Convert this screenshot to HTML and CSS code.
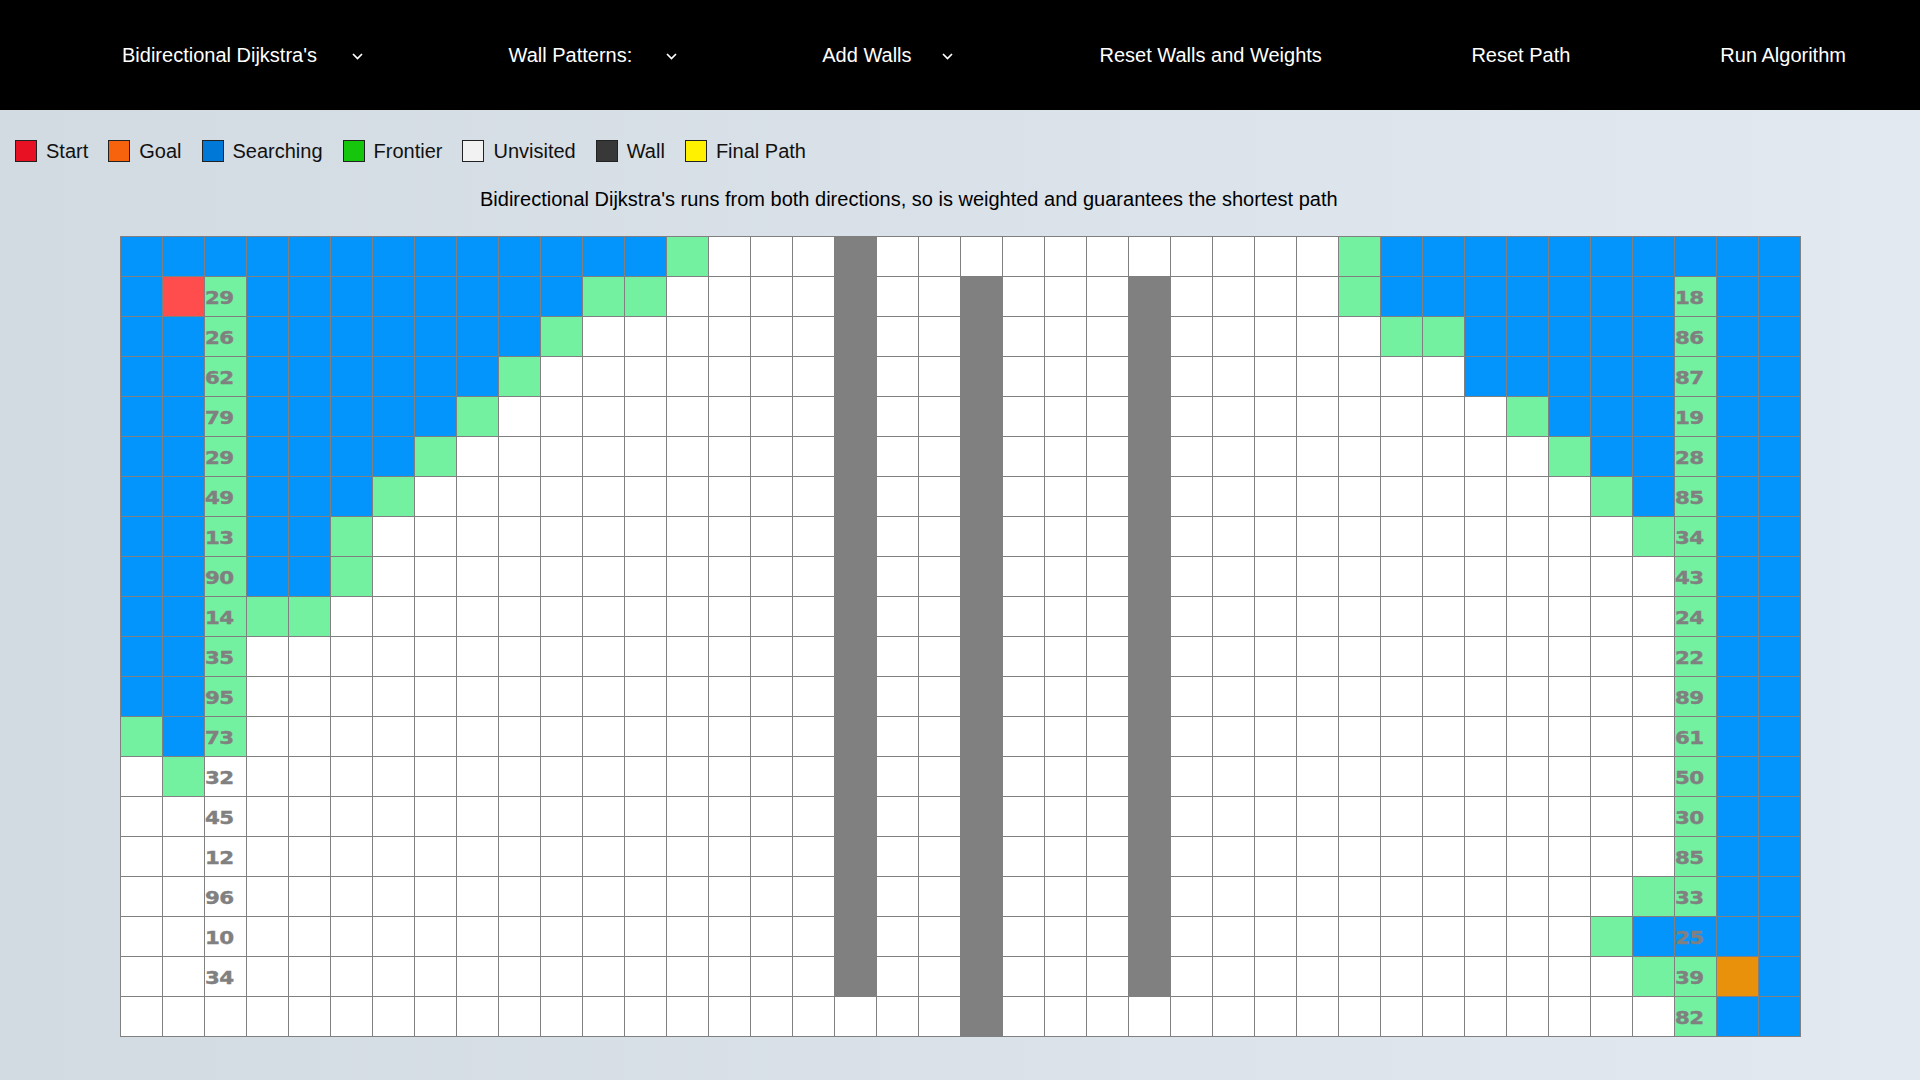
FILE: index.html
```html
<!DOCTYPE html>
<html lang="en">
<head>
<meta charset="utf-8">
<title>Pathfinding Visualizer</title>
<link rel="stylesheet" href="styles.css">
<script src="script.js" defer></script>
</head>
<body>
<header class="navbar">
  <div class="nav-item nav-item--algo">
    <span>Bidirectional Dijkstra's</span>
    <svg class="chevron chevron--algo" viewBox="0 0 11 7"><polyline points="1,1 5.5,5.5 10,1"/></svg>
  </div>
  <div class="nav-item nav-item--patterns">
    <span>Wall Patterns:</span>
    <svg class="chevron chevron--patterns" viewBox="0 0 11 7"><polyline points="1,1 5.5,5.5 10,1"/></svg>
  </div>
  <div class="nav-item nav-item--walls">
    <span>Add Walls</span>
    <svg class="chevron chevron--walls" viewBox="0 0 11 7"><polyline points="1,1 5.5,5.5 10,1"/></svg>
  </div>
  <div class="nav-item nav-item--reset-walls">Reset Walls and Weights</div>
  <div class="nav-item nav-item--reset-path">Reset Path</div>
  <div class="nav-item nav-item--run">Run Algorithm</div>
</header>

<div class="legend">
  <div class="legend-item"><span class="swatch swatch--start"></span>Start</div>
  <div class="legend-item"><span class="swatch swatch--goal"></span>Goal</div>
  <div class="legend-item"><span class="swatch swatch--searching"></span>Searching</div>
  <div class="legend-item"><span class="swatch swatch--frontier"></span>Frontier</div>
  <div class="legend-item"><span class="swatch swatch--unvisited"></span>Unvisited</div>
  <div class="legend-item"><span class="swatch swatch--wall"></span>Wall</div>
  <div class="legend-item"><span class="swatch swatch--path"></span>Final Path</div>
</div>

<p class="description">Bidirectional Dijkstra's runs from both directions, so is weighted and guarantees the shortest path</p>

<div class="board" id="board"></div>
</body>
</html>
```

FILE: styles.css
```css
* {
  box-sizing: border-box;
}

html,
body {
  margin: 0;
  padding: 0;
}

body {
  min-height: 100vh;
  font-family: "Liberation Sans", Arial, sans-serif;
  background: linear-gradient(to right, #d2dae2, #e2e9f0);
}

.navbar {
  height: 110px;
  background: #000;
  color: #fff;
  font-size: 20px;
  display: flex;
  align-items: center;
  padding-left: 122px;
}

.nav-item {
  display: flex;
  align-items: center;
  white-space: nowrap;
}

.nav-item--patterns {
  margin-left: 145.5px;
}

.nav-item--walls {
  margin-left: 145px;
}

.nav-item--reset-walls {
  margin-left: 147px;
}

.nav-item--reset-path {
  margin-left: 149.5px;
}

.nav-item--run {
  margin-left: 150px;
}

.chevron {
  width: 11px;
  height: 7px;
  fill: none;
  stroke: #fff;
  stroke-width: 1.7;
  margin-top: 2px;
}

.chevron--algo {
  margin-left: 35px;
}

.chevron--patterns {
  margin-left: 34px;
}

.chevron--walls {
  margin-left: 30px;
}

.legend {
  display: flex;
  align-items: center;
  height: 24px;
  margin-top: 29px;
  padding-left: 15px;
  font-size: 20px;
  color: #111;
}

.legend-item {
  display: flex;
  align-items: center;
  margin-right: 20px;
}

.swatch {
  width: 22px;
  height: 22px;
  border: 1px solid #222;
  margin-right: 9px;
}

.swatch--start { background: #e81123; }
.swatch--goal { background: #f7630c; }
.swatch--searching { background: #0078d7; }
.swatch--frontier { background: #16c60c; }
.swatch--unvisited { background: #f2f2f2; }
.swatch--wall { background: #383838; }
.swatch--path { background: #fff100; }

.description {
  margin: 25px 0 0;
  padding-left: 480px;
  font-size: 20px;
  line-height: 23px;
  color: #000;
}

.board {
  display: grid;
  grid-template-columns: repeat(40, 42px);
  grid-template-rows: repeat(20, 40px);
  width: 1681px;
  margin: 25px 0 0 120px;
  border-left: 1px solid #808080;
  border-top: 1px solid #808080;
}

.cell {
  background: #fff;
  border-right: 1px solid #808080;
  border-bottom: 1px solid #808080;
  font-family: "DejaVu Sans", Verdana, sans-serif;
  font-weight: bold;
  font-size: 17.5px;
  line-height: 36px;
  padding-top: 3px;
  color: #808080;
  overflow: hidden;
}

.cell-weight {
  display: inline-block;
  transform: scaleX(1.22);
  transform-origin: left center;
  letter-spacing: -0.5px;
  -webkit-text-stroke: 0.4px #808080;
}

.cell--visited { background: #0394fc; }
.cell--frontier { background: #73f1a1; }
.cell--start { background: #ff4c4c; }
.cell--goal { background: #e9910a; }
.cell--wall { background: #808080; }
```

FILE: script.js
```js
(function () {
  var specs = [
    [["b",13],["g",1],[".",15],["g",1],["b",10]],
    [["b",1],["s",1],["g",1],["b",8],["g",2],[".",16],["g",1],["b",7],["g",1],["b",2]],
    [["b",2],["g",1],["b",7],["g",1],[".",19],["g",2],["b",5],["g",1],["b",2]],
    [["b",2],["g",1],["b",6],["g",1],[".",22],["b",5],["g",1],["b",2]],
    [["b",2],["g",1],["b",5],["g",1],[".",24],["g",1],["b",3],["g",1],["b",2]],
    [["b",2],["g",1],["b",4],["g",1],[".",26],["g",1],["b",2],["g",1],["b",2]],
    [["b",2],["g",1],["b",3],["g",1],[".",28],["g",1],["b",1],["g",1],["b",2]],
    [["b",2],["g",1],["b",2],["g",1],[".",30],["g",2],["b",2]],
    [["b",2],["g",1],["b",2],["g",1],[".",31],["g",1],["b",2]],
    [["b",2],["g",3],[".",32],["g",1],["b",2]],
    [["b",2],["g",1],[".",34],["g",1],["b",2]],
    [["b",2],["g",1],[".",34],["g",1],["b",2]],
    [["g",1],["b",1],["g",1],[".",34],["g",1],["b",2]],
    [[".",1],["g",1],[".",35],["g",1],["b",2]],
    [[".",37],["g",1],["b",2]],
    [[".",37],["g",1],["b",2]],
    [[".",36],["g",2],["b",2]],
    [[".",35],["g",1],["b",4]],
    [[".",36],["g",2],["e",1],["b",1]],
    [[".",37],["g",1],["b",2]]
  ];
  var walls = [[17, 0, 18], [20, 1, 19], [24, 1, 18]];
  var leftNums = [29, 26, 62, 79, 29, 49, 13, 90, 14, 35, 95, 73, 32, 45, 12, 96, 10, 34];
  var rightNums = [18, 86, 87, 19, 28, 85, 34, 43, 24, 22, 89, 61, 50, 30, 85, 33, 25, 39, 82];
  var classes = { b: "cell--visited", g: "cell--frontier", s: "cell--start", e: "cell--goal", w: "cell--wall" };

  var rows = specs.map(function (spec) {
    return spec.map(function (p) { return new Array(p[1] + 1).join(p[0]); }).join("").split("");
  });
  walls.forEach(function (w) {
    for (var r = w[1]; r <= w[2]; r++) rows[r][w[0]] = "w";
  });

  function weight(n) {
    var s = document.createElement("span");
    s.className = "cell-weight";
    s.textContent = n;
    return s;
  }

  var board = document.getElementById("board");
  var frag = document.createDocumentFragment();
  rows.forEach(function (row, r) {
    row.forEach(function (ch, c) {
      var cell = document.createElement("div");
      cell.className = "cell" + (classes[ch] ? " " + classes[ch] : "");
      if (c === 2 && r >= 1 && r <= 18) cell.appendChild(weight(leftNums[r - 1]));
      if (c === 37 && r >= 1 && r <= 19) cell.appendChild(weight(rightNums[r - 1]));
      frag.appendChild(cell);
    });
  });
  board.appendChild(frag);
})();
```
